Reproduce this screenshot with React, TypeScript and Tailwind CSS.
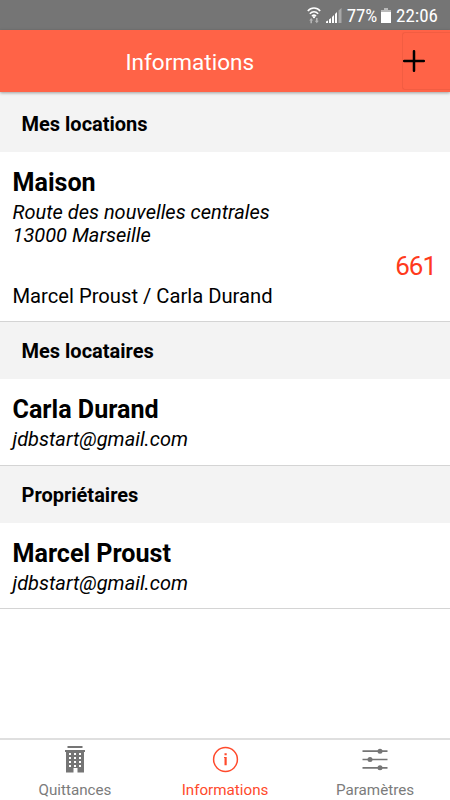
import type { ReactNode } from 'react';

const PEOPLE = [
  { section: 'Mes locataires', name: 'Carla Durand', email: 'jdbstart@gmail.com' },
  { section: 'Propriétaires', name: 'Marcel Proust', email: 'jdbstart@gmail.com' },
] as const;

function StatusBar() {
  return (
    <div className="flex h-[30px] shrink-0 items-center justify-end bg-[#757575] pr-3 text-white">
      {/* Wifi */}
      <svg className="mr-[5px] h-[18px] w-[14px]" viewBox="0 0 14 18" fill="none">
        <path d="M.8 5C4.200 1 9.800 1 13.200 5M2.800 7.800c2.600-2.700 5.800-2.700 8.400 0M4.900 10.200c1.200-1.200 3-1.200 4.200 0" stroke="white" strokeWidth="1.500" />
        <circle cx="7" cy="11.200" r="1.100" fill="white" />
        <path d="M4.200 12l2 2.500H5v2.700H3.400v-2.700H2.200zM9.800 17.200l-2-2.500H9V12h1.600v2.700h1.200z" fill="#b5b5b5" />
      </svg>
      {/* Signal */}
      <svg className="mr-[5px] h-[15px] w-4" viewBox="0 0 16 15">
        <path d="M0 15v-1.500L2 12.500V15zM3 15v-3.500l2-1.500v5zM6 15V9l2-2v8zM9 15V6l2-2v11z" fill="white" />
        <path d="M12.500 15V2.500l3-2.500v15z" fill="#a8a8a8" />
      </svg>
      <span className="pt-px font-['Roboto_Condensed',Roboto,sans-serif] text-[19px] leading-none tracking-[-0.200px]">77%</span>
      <svg className="ml-[4px] mr-[5px] h-[15px] w-[10px]" viewBox="0 0 10 15">
        <path d="M3 0h4v2h3v3H0V2h3z" fill="#b9b9b9" />
        <path d="M0 4h10v11H0z" fill="white" />
      </svg>
      <span className="pt-px font-['Roboto_Condensed',Roboto,sans-serif] text-[19px] leading-none">22:06</span>
    </div>
  );
}

function Header() {
  return (
    <header className="relative z-10 flex h-[62px] shrink-0 items-center bg-[#ff6347] shadow-[0_1px_3px_rgba(0,0,0,0.35)]">
      <h1 className="ml-[125.500px] flex-1 pt-[3px] text-[22.500px] leading-none text-white">Informations</h1>
      <button
        type="button"
        aria-label="Ajouter"
        className="h-[58px] w-12 rounded-l-[3px] border border-r-0 border-[#f25d42]"
      >
        <svg className="h-[22px] w-[22px]" viewBox="0 0 22 22" fill="none">
          <path d="M11 1.200v19.600M1.200 11h19.600" stroke="black" strokeWidth="2.500" strokeLinecap="round" />
        </svg>
      </button>
    </header>
  );
}

function SectionTitle({ children }: { children: ReactNode }) {
  return (
    <h2 className="flex h-[57px] items-center bg-[#f3f3f3] pl-[21.500px] pt-px text-[20px] font-bold leading-none">
      {children}
    </h2>
  );
}

function BottomNav() {
  return (
    <nav className="grid h-[62px] shrink-0 grid-cols-3 border-t-2 border-[#dfdfdf] text-[15.200px] leading-none text-[#7b7b7b]">
      <a className="flex flex-col items-center pt-[6px]">
        <svg className="h-[27px] w-5" viewBox="0 0 20 27">
          <path
            fill="#757575"
            fillRule="evenodd"
            d="M2.500 0h15v2h-15zM0 4h20v2h-1v20.500h-6.500V22h-4v4.500H1V6H0zM4 7v2h2V7zm5 0v2h2V7zm5 0v2h2V7zM4 11v2h2v-2zm5 0v2h2v-2zm5 0v2h2v-2zM4 15v2h2v-2zm5 0v2h2v-2zm5 0v2h2v-2zM4 19v2h2v-2zm5 0v2h2v-2zm5 0v2h2v-2z"
          />
        </svg>
        <span className="mt-[10px]">Quittances</span>
      </a>
      <a className="flex flex-col items-center pt-[6px] text-[#ff4a2c]">
        <svg className="h-[27px] w-[27px]" viewBox="0 0 27 27" fill="none">
          <circle cx="13.500" cy="13.500" r="11.900" stroke="currentColor" strokeWidth="1.500" />
          <path d="M12.500 7.200h2.200v2.100h-2.200zM12 11h2.700v8.200h-2.200v-7.200H12z" fill="currentColor" />
        </svg>
        <span className="mt-[10px]">Informations</span>
      </a>
      <a className="flex flex-col items-center pt-[6px]">
        <svg className="h-[27px] w-[26px]" viewBox="0 0 26 27">
          <path d="M.5 5.200h25M.5 13.500h25M.5 21.800h25" stroke="#757575" strokeWidth="1.700" />
          <g fill="#757575">
            <circle cx="18" cy="5.200" r="2.500" />
            <circle cx="8" cy="13.500" r="2.500" />
            <circle cx="18" cy="21.800" r="2.500" />
          </g>
        </svg>
        <span className="mt-[10px]">Paramètres</span>
      </a>
    </nav>
  );
}

export default function App() {
  return (
    <div className="flex h-[800px] w-[450px] flex-col overflow-hidden bg-white font-[Roboto,sans-serif] text-black">
      <StatusBar />
      <Header />
      <main className="flex-1">
        <div className="bg-[#f3f3f3] pt-[3px]">
          <SectionTitle>Mes locations</SectionTitle>
        </div>
        <article className="h-[170px] border-b border-[#d4d4d4] px-[12.500px] pt-[17px]">
          <h3 className="text-[25.100px] font-bold leading-[28px]">Maison</h3>
          <p className="mt-[4px] text-[20px] italic leading-[23px]">
            Route des nouvelles centrales
            <br />
            13000 Marseille
          </p>
          <p className="pr-[1.500px] pt-px text-right text-[26px] leading-[36px] tracking-[-1px] text-[#ff3a1c]">661</p>
          <p className="text-[20.200px] leading-6">Marcel Proust / Carla Durand</p>
        </article>
        {PEOPLE.map((person) => (
          <section key={person.section}>
            <SectionTitle>{person.section}</SectionTitle>
            <article className="h-[86.500px] border-b border-[#d4d4d4] px-[12.500px] pt-[17px]">
              <h3 className="text-[25.100px] font-bold leading-[28px]">{person.name}</h3>
              <p className="mt-[4px] text-[20px] italic leading-[23.500px]">{person.email}</p>
            </article>
          </section>
        ))}
      </main>
      <BottomNav />
    </div>
  );
}
